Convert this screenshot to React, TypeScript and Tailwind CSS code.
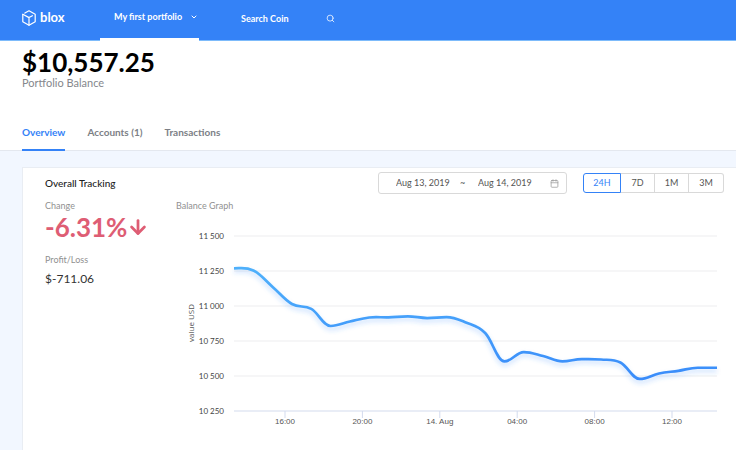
import { ArrowDown, Calendar, ChevronDown, Search } from "lucide-react";

const tabs = ["Overview", "Accounts (1)", "Transactions"];
const ranges = ["24H", "7D", "1M", "3M"];

// hourly portfolio value in USD
const balances = [
  11269, 11254, 11136, 11014, 10979, 10857, 10889, 10918, 10919, 10926, 10914,
  10921, 10882, 10807, 10604, 10671, 10643, 10604, 10621, 10618, 10596, 10479,
  10518, 10537, 10559, 10559,
];
const yTicks = [11500, 11250, 11000, 10750, 10500, 10250];
const xTicks = ["16:00", "20:00", "14. Aug", "04:00", "08:00", "12:00"];

const plot = { left: 58, right: 541, top: 20, bottom: 195 };

const toX = (i: number) =>
  plot.left + (i / (balances.length - 1)) * (plot.right - plot.left);
const toY = (value: number) =>
  plot.top + ((11500 - value) / 1250) * (plot.bottom - plot.top);

function linePath(values: number[]) {
  const pts = values.map((v, i) => ({ x: toX(i), y: toY(v) }));
  // flat at local peaks and dips, averaged slope elsewhere
  const slopes = pts.map((p, i) => {
    const prev = pts[i - 1];
    const next = pts[i + 1];
    if (!prev || !next) return 0;
    if ((p.y - prev.y) * (next.y - p.y) <= 0) return 0;
    return (next.y - prev.y) / (next.x - prev.x);
  });
  return pts
    .map((p, i) => {
      if (i === 0) return `M${p.x} ${p.y}`;
      const prev = pts[i - 1];
      const dx = (p.x - prev.x) * 0.38;
      return `C${prev.x + dx} ${prev.y + slopes[i - 1] * dx} ${p.x - dx} ${p.y - slopes[i] * dx} ${p.x} ${p.y}`;
    })
    .join(" ");
}

function BalanceChart() {
  return (
    <svg
      viewBox="0 0 548 220"
      className="mt-0.5 block h-auto w-full"
      role="img"
      aria-label="Balance graph"
    >
      <defs>
        <linearGradient id="line" x1="0" y1="0" x2="0" y2="1">
          <stop offset="0" stopColor="#4eb0fb" />
          <stop offset="1" stopColor="#3a8cfa" />
        </linearGradient>
        <filter id="glow" x="-5%" y="-20%" width="110%" height="150%">
          <feGaussianBlur stdDeviation="2" />
        </filter>
      </defs>
      {yTicks.map((tick) => (
        <g key={tick}>
          <line
            x1={plot.left}
            x2={plot.right}
            y1={toY(tick)}
            y2={toY(tick)}
            stroke={tick === 10250 ? "#e9edf6" : "#ededef"}
            strokeWidth={tick === 10250 ? 2 : 1}
          />
          <text
            x={48}
            y={toY(tick) + 3}
            textAnchor="end"
            className="fill-[#444] text-[8px]"
          >
            {tick.toString().replace(/(\d{2})(\d{3})/, "$1 $2")}
          </text>
        </g>
      ))}
      {xTicks.map((tick, i) => {
        const x = 109 + i * 77.4;
        return (
          <g key={tick}>
            <line x1={x} x2={x} y1={195} y2={202} stroke="#d3dbee" />
            <text
              x={x}
              y={208}
              textAnchor="middle"
              className="fill-[#555] font-['Liberation_Sans',sans-serif] text-[8px]"
            >
              {tick}
            </text>
          </g>
        );
      })}
      <text
        transform="translate(18 107) rotate(-90)"
        textAnchor="middle"
        className="fill-[#555] font-['Open_Sans',sans-serif] text-[8px]"
      >
        value USD
      </text>
      <path
        d={linePath(balances)}
        transform="translate(0 3)"
        fill="none"
        stroke="#3a8cfa"
        strokeOpacity="0.2"
        strokeWidth="4"
        filter="url(#glow)"
      />
      <path
        d={linePath(balances)}
        fill="none"
        stroke="url(#line)"
        strokeWidth="2.7"
        strokeLinejoin="round"
      />
    </svg>
  );
}

export default function App() {
  return (
    <div className="flex min-h-screen flex-col bg-[#f2f7ff] font-[Lato,sans-serif] text-[#333]">
      <header className="flex h-[41px] items-stretch border-b border-[#7dbbfb] bg-[#3482f7] pl-[22px] text-white">
        <a href="#" className="mb-1 flex w-[78px] items-center gap-1">
          <svg
            viewBox="0 0 14 16"
            className="h-4 w-[14px]"
            fill="none"
            stroke="currentColor"
            strokeWidth="1.2"
            strokeLinejoin="round"
            strokeLinecap="round"
          >
            <path d="M2.9 3.1 7 .8l6.2 3.5v7.4L7 15.2.8 11.7V4.3" />
            <path d="M.8 4.3 7 7.6v7.6M7 7.6l3.4-1.9" />
          </svg>
          <span className="text-[13px] font-bold">blox</span>
        </a>
        <button className="-mb-px flex w-[99px] items-center gap-2 border-b-[3px] border-white pb-1 pl-[14px] text-[9px] font-bold whitespace-nowrap">
          My first portfolio
          <ChevronDown size={8} strokeWidth={3} />
        </button>
        <div className="ml-[42px] flex items-center pb-1">
          <input
            type="text"
            aria-label="Search Coin"
            placeholder="Search Coin"
            className="h-5 w-[85px] text-[9px] font-bold outline-none placeholder:text-white"
          />
          <Search size={9} />
        </div>
      </header>

      <section className="border-b border-[#e4e8ef] bg-white pl-[22px]">
        <h1 className="pt-[7px] text-[26px] leading-7 font-bold text-black">
          $10,557.25
        </h1>
        <p className="text-[11px] leading-[14px] text-[#85878c]">
          Portfolio Balance
        </p>
        <nav className="-mb-px flex gap-[22px] pt-7">
          {tabs.map((tab, i) => (
            <a
              key={tab}
              href="#"
              className={
                i === 0
                  ? "border-b-2 border-[#3482f7] pt-2 pb-[11px] text-[10px] leading-3 font-bold text-[#3482f7]"
                  : "border-b-2 border-transparent pt-2 pb-[11px] text-[10px] leading-3 font-bold text-[#7c7f86]"
              }
            >
              {tab}
            </a>
          ))}
        </nav>
      </section>

      <main className="mt-4 ml-[22px] flex-1 border-t border-l border-[#e9edf3] bg-white pr-3 pl-[22px]">
        <div className="flex items-center pt-1">
          <h2 className="mr-auto text-[10px] font-medium text-[#222]">
            Overall Tracking
          </h2>
          <div className="mr-4 flex h-[22px] w-[189px] items-center rounded-[3px] border border-[#d9d9d9] pr-[7px] pl-[17px] text-[9px] text-[#555]">
            <input
              aria-label="Start date"
              defaultValue="Aug 13, 2019"
              className="w-16 outline-none"
            />
            <span className="w-[18px]">~</span>
            <input
              aria-label="End date"
              defaultValue="Aug 14, 2019"
              className="w-16 outline-none"
            />
            <Calendar size={9} className="ml-auto text-[#999]" />
          </div>
          <div className="flex h-5 text-[9px] text-[#555]">
            {ranges.map((range, i) => (
              <button
                key={range}
                className={
                  i === 0
                    ? "w-[38px] rounded-l-[3px] border border-[#3482f7] text-[#3482f7]"
                    : "w-[34px] border-y border-r border-[#d9d9d9] last:w-[35px] last:rounded-r-[3px]"
                }
              >
                {range}
              </button>
            ))}
          </div>
        </div>

        <div className="flex pt-1">
          <dl className="w-[131px] shrink-0">
            <dt className="text-[9px] leading-4 text-[#919191]">Change</dt>
            <dd className="flex items-center text-[26px] leading-[26px] font-bold text-[#de5d74]">
              -6.31%
              <ArrowDown size={22} strokeWidth={3} />
            </dd>
            <dt className="pt-3 text-[9px] leading-4 text-[#919191]">
              Profit/Loss
            </dt>
            <dd className="pt-[3px] text-[12px] leading-4">$-711.06</dd>
          </dl>
          <figure className="flex-1">
            <figcaption className="text-[9px] leading-4 text-[#919191]">
              Balance Graph
            </figcaption>
            <BalanceChart />
          </figure>
        </div>
      </main>
    </div>
  );
}
